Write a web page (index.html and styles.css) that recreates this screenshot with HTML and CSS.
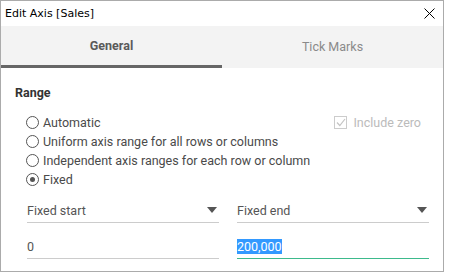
FILE: index.html
```html
<!DOCTYPE html>
<html lang="en">
<head>
    <meta charset="UTF-8">
    <title>Edit Axis [Sales]</title>
    <link rel="stylesheet" href="styles.css">
</head>
<body>
    <div class="dialog">
        <div class="titlebar">
            <span class="title">Edit Axis [Sales]</span>
            <svg class="close" width="11" height="11" viewBox="0 0 11 11">
                <path d="M0.5 0.5 L10.5 10.5 M10.5 0.5 L0.5 10.5" stroke="#000" stroke-width="1" fill="none"/>
            </svg>
        </div>

        <div class="tabs">
            <div class="tab active">General</div>
            <div class="tab">Tick Marks</div>
        </div>

        <div class="content">
            <div class="section-title">Range</div>

            <div class="options">
                <div class="radios">
                    <label class="radio"><span class="dot"></span>Automatic</label>
                    <label class="radio"><span class="dot"></span>Uniform axis range for all rows or columns</label>
                    <label class="radio"><span class="dot"></span>Independent axis ranges for each row or column</label>
                    <label class="radio"><span class="dot checked"></span>Fixed</label>
                </div>
                <label class="check disabled">
                    <span class="box">
                        <svg width="10" height="9" viewBox="0 0 10 9">
                            <path d="M1 4.5 L3.8 7.5 L9 1" stroke="#c4c4c4" stroke-width="1.2" fill="none"/>
                        </svg>
                    </span>Include zero
                </label>
            </div>

            <div class="fields">
                <div class="field">
                    <div class="select">Fixed start<span class="arrow"></span></div>
                    <div class="input">0</div>
                </div>
                <div class="field">
                    <div class="select">Fixed end<span class="arrow"></span></div>
                    <div class="input focused"><span class="selected">200,000</span></div>
                </div>
            </div>
        </div>
    </div>
</body>
</html>
```

FILE: styles.css
```css
body {
    margin: 0;
    background: #fff;
    font-family: Roboto, "Liberation Sans", sans-serif;
    color: #333;
}

.dialog {
    width: 442px;
    height: 270px;
    border: 1px solid #ababab;
    background: #fff;
}

.titlebar {
    height: 25px;
    display: flex;
    align-items: center;
    justify-content: space-between;
    padding: 0 8px 0 4px;
}

.title {
    font-family: "DejaVu Sans", sans-serif;
    font-size: 11px;
    color: #000;
}

.tabs {
    display: flex;
    height: 42px;
    background: #f3f3f3;
}

.tab {
    flex: 1;
    display: flex;
    align-items: center;
    justify-content: center;
    font-size: 12.5px;
    color: #8a8a8a;
    padding-bottom: 2px;
}

.tab.active {
    font-weight: bold;
    color: #5a5a5a;
    border-bottom: 3px solid #666;
    padding-bottom: 0;
}

.content {
    padding: 17px 14px 0 14px;
}

.section-title {
    font-weight: bold;
    font-size: 12.5px;
    color: #333;
}

.options {
    display: flex;
    justify-content: space-between;
    margin-top: 13px;
    padding-left: 11px;
    padding-right: 8px;
}

.radios {
    display: flex;
    flex-direction: column;
}

.radio {
    display: flex;
    align-items: center;
    height: 19px;
    font-size: 12.5px;
    color: #4a4a4a;
}

.dot {
    width: 11px;
    height: 11px;
    border: 1px solid #555;
    border-radius: 50%;
    margin-right: 4px;
    position: relative;
}

.dot.checked::after {
    content: "";
    position: absolute;
    left: 3px;
    top: 3px;
    width: 5px;
    height: 5px;
    border-radius: 50%;
    background: #555;
}

.check {
    display: flex;
    align-items: center;
    height: 19px;
    font-size: 12.5px;
    color: #bbb;
}

.box {
    width: 11px;
    height: 11px;
    border: 1px solid #ccc;
    margin-right: 6px;
    display: flex;
    align-items: center;
    justify-content: center;
}

.fields {
    display: flex;
    gap: 18px;
    margin-top: 9px;
    padding-left: 12px;
}

.field {
    width: 192px;
}

.select {
    display: flex;
    justify-content: space-between;
    align-items: center;
    height: 24px;
    border-bottom: 1px solid #ccc;
    font-size: 12.5px;
    color: #555;
}

.arrow {
    width: 0;
    height: 0;
    border-left: 5px solid transparent;
    border-right: 5px solid transparent;
    border-top: 6px solid #555;
    margin-right: 2px;
}

.input {
    height: 24px;
    margin-top: 11px;
    border-bottom: 1px solid #ccc;
    font-size: 12.5px;
    color: #555;
    display: flex;
    align-items: center;
}

.input.focused {
    border-bottom-color: #3dba8c;
}

.selected {
    background: #3399ff;
    color: #fff;
}
```
